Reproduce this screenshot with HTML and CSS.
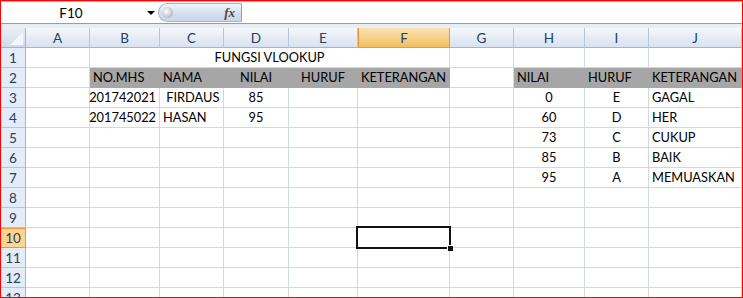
FILE: index.html
```html
<!DOCTYPE html>
<html>
<head>
<meta charset="utf-8">
<title>FUNGSI VLOOKUP</title>
<link rel="stylesheet" href="styles.css">
</head>
<body>
<div class="window">
	<div class="formula-bar">
		<div class="name-box"><span class="name">F10</span><span class="arrow"></span></div>
		<div class="fx-pill"><span class="knob"></span><span class="fx">fx</span></div>
		<div class="formula-input"></div>
	</div>
	<div class="band"></div>
	<div class="sheet">
		<div class="corner"></div>
		<div class="ch">A</div><div class="ch">B</div><div class="ch">C</div><div class="ch">D</div><div class="ch">E</div>
		<div class="ch sel">F</div><div class="ch">G</div><div class="ch">H</div><div class="ch">I</div><div class="ch">J</div>

		<div class="rh">1</div><div></div><div class="m span5">FUNGSI VLOOKUP</div><div></div><div></div><div></div><div></div>

		<div class="rh">2</div><div></div>
		<div class="hd">NO.MHS</div><div class="hd">NAMA</div><div class="hd m">NILAI</div><div class="hd m">HURUF</div><div class="hd m">KETERANGAN</div>
		<div></div>
		<div class="hd">NILAI</div><div class="hd">HURUF</div><div class="hd">KETERANGAN</div>

		<div class="rh">3</div><div></div><div class="r">201742021</div><div>&nbsp;FIRDAUS</div><div class="m">85</div><div></div><div></div>
		<div></div><div class="m">0</div><div class="m">E</div><div>GAGAL</div>

		<div class="rh">4</div><div></div><div class="r">201745022</div><div>HASAN</div><div class="m">95</div><div></div><div></div>
		<div></div><div class="m">60</div><div class="m">D</div><div>HER</div>

		<div class="rh">5</div><div></div><div></div><div></div><div></div><div></div><div></div>
		<div></div><div class="m">73</div><div class="m">C</div><div>CUKUP</div>

		<div class="rh">6</div><div></div><div></div><div></div><div></div><div></div><div></div>
		<div></div><div class="m">85</div><div class="m">B</div><div>BAIK</div>

		<div class="rh">7</div><div></div><div></div><div></div><div></div><div></div><div></div>
		<div></div><div class="m">95</div><div class="m">A</div><div>MEMUASKAN</div>

		<div class="rh">8</div><div></div><div></div><div></div><div></div><div></div><div></div><div></div><div></div><div></div><div></div>
		<div class="rh">9</div><div></div><div></div><div></div><div></div><div></div><div></div><div></div><div></div><div></div><div></div>
		<div class="rh sel">10</div><div></div><div></div><div></div><div></div><div></div><div class="active"></div><div></div><div></div><div></div><div></div>
		<div class="rh">11</div><div></div><div></div><div></div><div></div><div></div><div></div><div></div><div></div><div></div><div></div>
		<div class="rh">12</div><div></div><div></div><div></div><div></div><div></div><div></div><div></div><div></div><div></div><div></div>
		<div class="rh">13</div><div></div><div></div><div></div><div></div><div></div><div></div><div></div><div></div><div></div><div></div>
	</div>
</div>
</body>
</html>
```

FILE: styles.css
```css
body {
	margin: 0;
	background: #fff;
}
.window {
	width: 741px;
	height: 296px;
	border: 1px solid #f00;
	overflow: hidden;
	font-family: Lato, "Liberation Sans", sans-serif;
}
.formula-bar {
	display: flex;
	height: 21px;
	border-top: 1px solid #a9bcd3;
	border-bottom: 1px solid #8aa0ba;
	background: #fff;
}
.name-box {
	width: 157px;
	display: flex;
	align-items: center;
}
.name-box .name {
	width: 140px;
	text-align: center;
	font-size: 13.5px;
	color: #000;
	padding-top: 1px;
}
.name-box .arrow {
	width: 0;
	height: 0;
	border-left: 4px solid transparent;
	border-right: 4px solid transparent;
	border-top: 4px solid #000;
	margin-left: 6px;
	margin-top: 1px;
}
.fx-pill {
	width: 84px;
	height: 19px;
	margin-top: 1px;
	border: 1px solid #a3b6cd;
	border-right: 1px solid #8aa0ba;
	border-radius: 10px 0 0 10px;
	background: linear-gradient(#f1f5fb, #d2deee 60%, #c8d7ea);
	display: flex;
	align-items: center;
	box-sizing: border-box;
}
.fx-pill .knob {
	width: 11px;
	height: 11px;
	border-radius: 50%;
	margin-left: 3px;
	background: radial-gradient(circle at 40% 40%, #fff, #c9ccd2 55%, #9ea3ab);
}
.fx-pill .fx {
	margin-left: auto;
	margin-right: 6px;
	font-family: "Liberation Serif", serif;
	font-style: italic;
	font-weight: bold;
	font-size: 13px;
	color: #4a4a4a;
}
.formula-input {
	flex: 1;
	background: #fff;
}
.band {
	height: 4px;
	background: #e9eef5;
}
.sheet {
	display: grid;
	grid-template-columns: 25px 64px 70px 64px 65px 69px 92px 64px 71px 64px 93px;
	grid-auto-rows: 20px;
}
.sheet > div {
	box-sizing: border-box;
	border-right: 1px solid #d0d7e5;
	border-bottom: 1px solid #d0d7e5;
	padding: 0 3px 2px;
	font-size: 12.8px;
	line-height: 16px;
	color: #000;
	white-space: nowrap;
	display: flex;
	align-items: flex-end;
}
.sheet > .m {
	justify-content: center;
}
.sheet > .r {
	justify-content: flex-end;
}
.sheet > .span5 {
	grid-column: span 5;
}
.sheet > .hd {
	background: #a6a6a6;
	border-color: #a6a6a6;
}
.sheet > .corner {
	background: linear-gradient(#e9eff7, #cfdbeb);
	border-right: 1px solid #9eb6ce;
	border-bottom: 1px solid #9eb6ce;
	position: relative;
}
.sheet > .corner::after {
	content: "";
	position: absolute;
	right: 2px;
	bottom: 2px;
	border-left: 13px solid transparent;
	border-bottom: 13px solid #f4f7fb;
}
.sheet > .ch {
	background: linear-gradient(#f6f9fc, #e4ebf4 55%, #d9e2ee);
	border-right: 1px solid #b4c6da;
	border-bottom: 1px solid #9eb6ce;
	justify-content: center;
	align-items: center;
	padding: 0;
	color: #27405f;
	font-size: 13.5px;
}
.sheet > .ch.sel {
	background: linear-gradient(#fae3b5, #f6d088 55%, #f1c05d);
	border: 1px solid #f29536;
	border-top: none;
}
.sheet > .rh {
	background: #e4ecf7;
	border-right: 1px solid #9eb6ce;
	border-bottom: 1px solid #b4c6da;
	justify-content: center;
	align-items: center;
	padding: 0;
	color: #27405f;
	font-size: 13.5px;
}
.sheet > .rh.sel {
	background: #ffd58f;
	border: 1px solid #f29536;
	border-left: none;
}
.sheet > .active {
	position: relative;
}
.sheet > .active::before {
	content: "";
	position: absolute;
	left: -2px;
	top: -2px;
	right: -2px;
	bottom: -2px;
	border: 2px solid #111;
}
.sheet > .active::after {
	content: "";
	position: absolute;
	right: -4px;
	bottom: -4px;
	width: 5px;
	height: 5px;
	background: #111;
	border-left: 1px solid #fff;
	border-top: 1px solid #fff;
}
```
